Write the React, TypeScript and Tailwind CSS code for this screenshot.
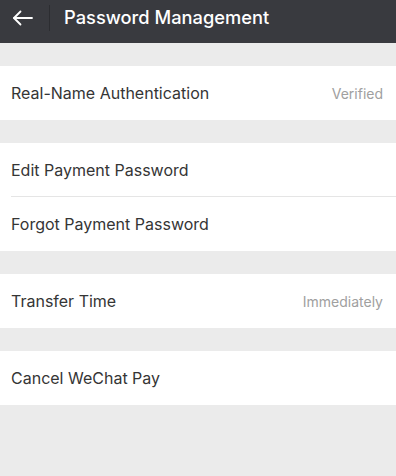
const font = { fontFamily: 'Inter, "Liberation Sans", Arial, sans-serif' };

function Row({ label, value, divider }: { label: string; value?: string; divider?: boolean }) {
  return (
    <div className="bg-white pl-[11px]">
      <div className={`flex h-[54px] items-center justify-between pr-[13px] ${divider ? 'border-b border-[#e5e5e5]' : ''}`}>
        <span className="text-[16px] text-[#353535]">{label}</span>
        {value && <span className="text-[14px] text-[#a0a0a0]">{value}</span>}
      </div>
    </div>
  );
}

export default function App() {
  return (
    <div className="min-h-[476px] bg-[#ebebeb]" style={font}>
      <div className="bg-[#393a3f] h-[43px]">
        <div className="flex h-[35px] items-center">
          <div className="pl-[11px]">
            <svg width="24" height="24" viewBox="0 0 24 24" fill="none" stroke="white" strokeWidth="1.8" strokeLinecap="round" strokeLinejoin="round">
              <path d="M3 12H21" />
              <path d="M9.5 5.5L3 12L9.5 18.5" />
            </svg>
          </div>
          <div className="ml-[14px] w-px h-[26px] bg-[#2c2d31]" />
          <h1 className="ml-[14px] text-[18.3px] font-medium text-white">Password Management</h1>
        </div>
      </div>

      <div className="pt-[23px] space-y-[23px]">
        <Row label="Real-Name Authentication" value="Verified" />
        <div>
          <Row label="Edit Payment Password" divider />
          <Row label="Forgot Payment Password" />
        </div>
        <Row label="Transfer Time" value="Immediately" />
        <Row label="Cancel WeChat Pay" />
      </div>
    </div>
  );
}
